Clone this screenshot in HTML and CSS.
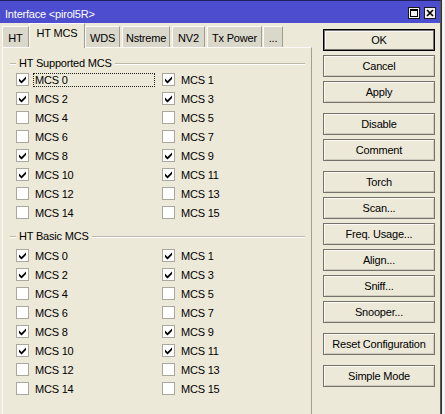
FILE: index.html
```html
<!DOCTYPE html>
<html>
<head>
<meta charset="utf-8">
<title>Interface</title>
<link rel="stylesheet" href="styles.css">
</head>
<body>
<div class="screen">
  <div class="window">
    <div class="titlebar">
      <span class="title">Interface &lt;pirol5R&gt;</span>
      <div class="tb-buttons">
        <svg class="tb-btn" width="12" height="12" viewBox="0 0 12 12"><rect x="0.5" y="0.5" width="11" height="11" fill="#f3f2ee" stroke="#1a1a1a"/><rect x="2.5" y="2.5" width="7" height="7" fill="none" stroke="#000"/><rect x="2" y="2" width="8" height="2" fill="#000"/></svg>
        <svg class="tb-btn" width="12" height="12" viewBox="0 0 12 12"><rect x="0.5" y="0.5" width="11" height="11" fill="#f3f2ee" stroke="#1a1a1a"/><path d="M3 3 L9 9 M9 3 L3 9" stroke="#000" stroke-width="1.7"/></svg>
      </div>
    </div>
    <div class="main">
      <div class="left">
        <div class="tabs">
          <div class="tab t-ht">HT</div>
          <div class="tab active t-mcs">HT MCS</div>
          <div class="tab t-wds">WDS</div>
          <div class="tab t-ns">Nstreme</div>
          <div class="tab t-nv2">NV2</div>
          <div class="tab t-tx">Tx Power</div>
          <div class="tab t-more">...</div>
        </div>
        <div class="page">
          <div class="legend first"><span>HT Supported MCS</span></div>
          <div class="grid">
            <div class="item"><span class="box on"><svg viewBox="0 0 11 11" width="11" height="11"><polygon points="2,4.5 4.5,7 9,2.5 9,5 4.5,9.5 2,7"/></svg></span><span class="lbl focus">MCS 0</span></div>
            <div class="item"><span class="box on"><svg viewBox="0 0 11 11" width="11" height="11"><polygon points="2,4.5 4.5,7 9,2.5 9,5 4.5,9.5 2,7"/></svg></span><span class="lbl">MCS 1</span></div>
            <div class="item"><span class="box on"><svg viewBox="0 0 11 11" width="11" height="11"><polygon points="2,4.5 4.5,7 9,2.5 9,5 4.5,9.5 2,7"/></svg></span><span class="lbl">MCS 2</span></div>
            <div class="item"><span class="box on"><svg viewBox="0 0 11 11" width="11" height="11"><polygon points="2,4.5 4.5,7 9,2.5 9,5 4.5,9.5 2,7"/></svg></span><span class="lbl">MCS 3</span></div>
            <div class="item"><span class="box"></span><span class="lbl">MCS 4</span></div>
            <div class="item"><span class="box"></span><span class="lbl">MCS 5</span></div>
            <div class="item"><span class="box"></span><span class="lbl">MCS 6</span></div>
            <div class="item"><span class="box"></span><span class="lbl">MCS 7</span></div>
            <div class="item"><span class="box on"><svg viewBox="0 0 11 11" width="11" height="11"><polygon points="2,4.5 4.5,7 9,2.5 9,5 4.5,9.5 2,7"/></svg></span><span class="lbl">MCS 8</span></div>
            <div class="item"><span class="box on"><svg viewBox="0 0 11 11" width="11" height="11"><polygon points="2,4.5 4.5,7 9,2.5 9,5 4.5,9.5 2,7"/></svg></span><span class="lbl">MCS 9</span></div>
            <div class="item"><span class="box on"><svg viewBox="0 0 11 11" width="11" height="11"><polygon points="2,4.5 4.5,7 9,2.5 9,5 4.5,9.5 2,7"/></svg></span><span class="lbl">MCS 10</span></div>
            <div class="item"><span class="box on"><svg viewBox="0 0 11 11" width="11" height="11"><polygon points="2,4.5 4.5,7 9,2.5 9,5 4.5,9.5 2,7"/></svg></span><span class="lbl">MCS 11</span></div>
            <div class="item"><span class="box"></span><span class="lbl">MCS 12</span></div>
            <div class="item"><span class="box"></span><span class="lbl">MCS 13</span></div>
            <div class="item"><span class="box"></span><span class="lbl">MCS 14</span></div>
            <div class="item"><span class="box"></span><span class="lbl">MCS 15</span></div>
          </div>
          <div class="legend second"><span>HT Basic MCS</span></div>
          <div class="grid basic">
            <div class="item"><span class="box on"><svg viewBox="0 0 11 11" width="11" height="11"><polygon points="2,4.5 4.5,7 9,2.5 9,5 4.5,9.5 2,7"/></svg></span><span class="lbl">MCS 0</span></div>
            <div class="item"><span class="box on"><svg viewBox="0 0 11 11" width="11" height="11"><polygon points="2,4.5 4.5,7 9,2.5 9,5 4.5,9.5 2,7"/></svg></span><span class="lbl">MCS 1</span></div>
            <div class="item"><span class="box on"><svg viewBox="0 0 11 11" width="11" height="11"><polygon points="2,4.5 4.5,7 9,2.5 9,5 4.5,9.5 2,7"/></svg></span><span class="lbl">MCS 2</span></div>
            <div class="item"><span class="box on"><svg viewBox="0 0 11 11" width="11" height="11"><polygon points="2,4.5 4.5,7 9,2.5 9,5 4.5,9.5 2,7"/></svg></span><span class="lbl">MCS 3</span></div>
            <div class="item"><span class="box"></span><span class="lbl">MCS 4</span></div>
            <div class="item"><span class="box"></span><span class="lbl">MCS 5</span></div>
            <div class="item"><span class="box"></span><span class="lbl">MCS 6</span></div>
            <div class="item"><span class="box"></span><span class="lbl">MCS 7</span></div>
            <div class="item"><span class="box on"><svg viewBox="0 0 11 11" width="11" height="11"><polygon points="2,4.5 4.5,7 9,2.5 9,5 4.5,9.5 2,7"/></svg></span><span class="lbl">MCS 8</span></div>
            <div class="item"><span class="box on"><svg viewBox="0 0 11 11" width="11" height="11"><polygon points="2,4.5 4.5,7 9,2.5 9,5 4.5,9.5 2,7"/></svg></span><span class="lbl">MCS 9</span></div>
            <div class="item"><span class="box on"><svg viewBox="0 0 11 11" width="11" height="11"><polygon points="2,4.5 4.5,7 9,2.5 9,5 4.5,9.5 2,7"/></svg></span><span class="lbl">MCS 10</span></div>
            <div class="item"><span class="box on"><svg viewBox="0 0 11 11" width="11" height="11"><polygon points="2,4.5 4.5,7 9,2.5 9,5 4.5,9.5 2,7"/></svg></span><span class="lbl">MCS 11</span></div>
            <div class="item"><span class="box"></span><span class="lbl">MCS 12</span></div>
            <div class="item"><span class="box"></span><span class="lbl">MCS 13</span></div>
            <div class="item"><span class="box"></span><span class="lbl">MCS 14</span></div>
            <div class="item"><span class="box"></span><span class="lbl">MCS 15</span></div>
          </div>
        </div>
      </div>
      <div class="buttons">
        <div class="bgroup">
          <div class="btn default">OK</div>
          <div class="btn">Cancel</div>
          <div class="btn">Apply</div>
        </div>
        <div class="bgroup">
          <div class="btn">Disable</div>
          <div class="btn">Comment</div>
        </div>
        <div class="bgroup">
          <div class="btn">Torch</div>
          <div class="btn">Scan...</div>
          <div class="btn">Freq. Usage...</div>
          <div class="btn">Align...</div>
          <div class="btn">Sniff...</div>
          <div class="btn">Snooper...</div>
        </div>
        <div class="bgroup">
          <div class="btn">Reset Configuration</div>
        </div>
        <div class="bgroup">
          <div class="btn">Simple Mode</div>
        </div>
      </div>
    </div>
  </div>
  <div class="side"></div>
</div>
</body>
</html>
```
FILE: styles.css
```css
* { box-sizing: border-box; }
html, body { margin: 0; padding: 0; }
body {
  width: 445px;
  height: 414px;
  overflow: hidden;
  background: #ffffff;
  font-family: "Liberation Sans", Arial, sans-serif;
  font-size: 11px;
  letter-spacing: -0.2px;
  color: #000;
}
.screen { display: flex; height: 414px; }
.window {
  width: 441px;
  height: 414px;
  flex: 0 0 441px;
  background: #ece9d8;
  border-top: 1px solid #202060;
  border-right: 1px solid #5a5850;
  display: flex;
  flex-direction: column;
}
.side {
  flex: 1;
  background: #f2f2f2;
  border-left: 1px solid #303030;
}
.titlebar {
  height: 22px;
  flex: 0 0 22px;
  background: #4d4dd0;
  display: flex;
  align-items: center;
  justify-content: space-between;
  padding: 0 4px 0 5px;
}
.title {
  color: #fff;
  padding-top: 4px;
  line-height: 14px;
}
.tb-buttons { display: flex; gap: 4px; padding-top: 2px; }
.tb-btn { display: block; }
.main { flex: 1; display: flex; min-height: 0; }
.left { width: 312px; flex: 0 0 312px; display: flex; flex-direction: column; }
.tabs {
  height: 24px;
  flex: 0 0 24px;
  display: flex;
  align-items: flex-end;
  padding-left: 2px;
  position: relative;
  z-index: 1;
}
.tab {
  height: 21px;
  padding: 3px 0 0;
  line-height: 17px;
  text-align: center;
  background: #dad7cb;
  border-top: 1px solid #fbfaf6;
  border-left: 1px solid #fbfaf6;
  border-right: 1px solid #9f9c90;
  white-space: nowrap;
}
.tab.active {
  height: 25px;
  margin-bottom: -1px;
  padding-top: 1px;
  background: #ece9d8;
}
.t-ht { width: 27px; }
.t-mcs { width: 56px; }
.t-wds { width: 35px; margin-right: 2px; }
.t-ns { width: 48px; margin-right: 2px; }
.t-nv2 { width: 33px; margin-right: 2px; }
.t-tx { width: 55px; margin-right: 1px; }
.t-more { width: 20px; }
.page {
  flex: 1;
  margin-left: 2px;
  width: 310px;
  border-top: 1px solid #fbfaf6;
  border-left: 1px solid #fbfaf6;
  border-right: 1px solid #a19e92;
  padding-top: 8px;
}
.legend {
  height: 14px;
  display: flex;
  align-items: center;
  margin: 0 6px 0 7px;
}
.legend::before, .legend::after {
  content: "";
  height: 1px;
  background: #bcb9ac;
  box-shadow: 0 1px 0 #fff;
}
.legend::before { width: 6px; }
.legend::after { flex: 1; }
.legend span { padding: 0 3px; line-height: 14px; }
.legend.second { margin-top: 7px; }
.grid {
  display: grid;
  grid-template-columns: 146px 146px;
  grid-auto-rows: 19px;
  padding-left: 13px;
}
.grid.basic { margin-top: 3px; }
.item { display: flex; align-items: center; }
.box {
  width: 13px;
  height: 13px;
  flex: 0 0 13px;
  background: #fff;
  border: 1px solid #aaa89e;
  display: flex;
  align-items: center;
  justify-content: center;
}
.box svg { display: block; fill: #000; }
.lbl {
  margin-left: 4px;
  width: 122px;
  height: 14px;
  line-height: 12px;
  padding: 0 1px;
  border: 1px dotted transparent;
  white-space: nowrap;
}
.lbl.focus { border-color: #222; }
.buttons {
  margin-left: 11px;
  width: 112px;
  padding-top: 6px;
  display: flex;
  flex-direction: column;
  gap: 10px;
}
.bgroup { display: flex; flex-direction: column; gap: 4px; }
.btn {
  height: 22px;
  border: 1px solid #75726a;
  background: #ece9d8;
  box-shadow: inset 1px 1px 0 #fbfaf6, inset -1px -1px 0 #cfccbf;
  display: flex;
  align-items: center;
  justify-content: center;
  white-space: nowrap;
}
.btn.default {
  border-color: #000;
  box-shadow: inset 0 0 0 1px #75726a, inset 2px 2px 0 #fbfaf6;
}
```
